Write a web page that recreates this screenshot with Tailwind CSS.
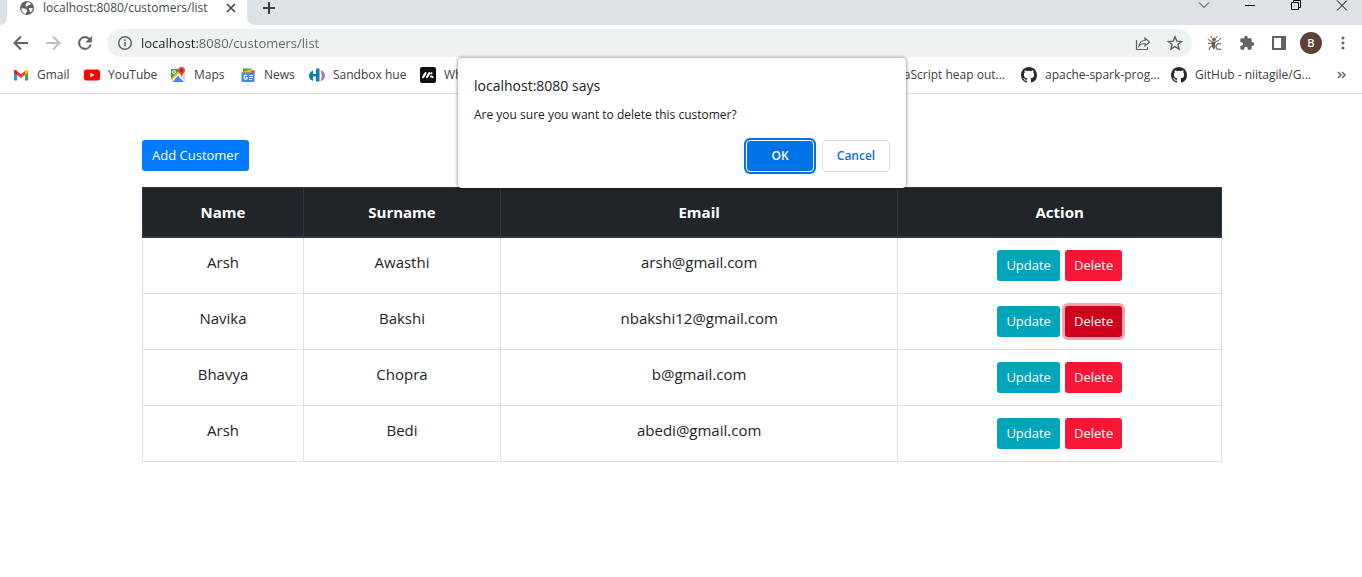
<!DOCTYPE html>
<html lang="en">
<head>
<meta charset="utf-8">
<meta name="viewport" content="width=device-width, initial-scale=1">
<title>localhost:8080/customers/list</title>
<script src="https://cdn.jsdelivr.net/npm/@tailwindcss/browser@4"></script>
</head>
<body class="relative flex min-h-screen flex-col bg-white font-['Open_Sans','Noto_Sans',sans-serif] text-[#212529]">

<svg class="hidden" aria-hidden="true">
  <symbol id="github" viewBox="0 0 16 16"><path fill="#24292f" d="M8 0C3.58 0 0 3.58 0 8c0 3.54 2.29 6.53 5.47 7.59.4.07.55-.17.55-.38 0-.19-.01-.82-.01-1.49-2.01.37-2.53-.49-2.69-.94-.09-.23-.48-.94-.82-1.13-.28-.15-.68-.52-.01-.53.63-.01 1.08.58 1.23.82.72 1.21 1.87.87 2.33.66.07-.52.28-.87.51-1.07-1.78-.2-3.64-.89-3.64-3.95 0-.87.31-1.59.82-2.15-.08-.2-.36-1.02.08-2.12 0 0 .67-.21 2.2.82a7.6 7.6 0 0 1 4 0c1.53-1.04 2.2-.82 2.2-.82.44 1.1.16 1.92.08 2.12.51.56.82 1.27.82 2.15 0 3.07-1.87 3.75-3.65 3.95.29.25.54.73.54 1.48 0 1.07-.01 1.93-.01 2.2 0 .21.15.46.55.38A8.01 8.01 0 0 0 16 8c0-4.42-3.58-8-8-8z"/></symbol>
</svg>

<header>
  <!-- Tab strip -->
  <div class="flex h-[25px] items-stretch justify-between bg-[#dee1e6]">
    <div class="flex">
      <div class="bg-white"><div class="h-full w-[7px] rounded-br-lg bg-[#dee1e6]"></div></div>
      <div class="flex w-[240px] items-start bg-white pl-3 pr-2.5">
        <svg class="size-4 shrink-0" viewBox="0 0 16 16" aria-hidden="true"><circle cx="8" cy="8" r="7" fill="#5f6368"/><path fill="#fff" d="M2.300 8.300L6 8.500l2 1.600v1.400l-1.300 1.200.2 1.500C4.200 13.800 2.300 11.500 2.300 8.300zM8.200 2.200c1.500 0 2.700.5 3.700 1.300L11 5H9.500L8.300 6.300 6.500 6.500V5zM10 8h3.700c-.1 2.100-1 3.700-2.300 4.600L10.500 11z"/></svg>
        <span class="ml-2 grow whitespace-nowrap text-[12px] leading-4 text-[#45494d]">localhost:8080/customers/list</span>
        <button class="mt-0.5 flex size-3 items-center justify-center" aria-label="Close tab"><svg class="size-2.5" viewBox="0 0 10 10" stroke="#3c4043" stroke-width="1.600"><path d="M1 1l8 8M9 1L1 9"/></svg></button>
      </div>
      <div class="bg-white"><div class="h-full w-2 rounded-bl-lg bg-[#dee1e6]"></div></div>
      <button class="ml-2 flex h-4 w-3 items-center" aria-label="New tab"><svg class="size-3" viewBox="0 0 12 12" stroke="#3c4043" stroke-width="2"><path d="M6 0v12M0 6h12"/></svg></button>
    </div>
    <div class="flex items-start gap-[34px] pr-[14px]">
      <button aria-label="Search tabs"><svg class="size-3" viewBox="0 0 12 12" fill="none" stroke="#202124"><path d="M1 2.500l5 5 5-5"/></svg></button>
      <button aria-label="Minimize"><svg class="size-3" viewBox="0 0 12 12" stroke="#000"><path d="M1 5.500h10"/></svg></button>
      <button aria-label="Restore"><svg class="size-3" viewBox="0 0 12 12" fill="none" stroke="#000"><path d="M1.500 2.500h7v7h-7zM3.500 2.500v-2h7v7h-2"/></svg></button>
      <button aria-label="Close"><svg class="size-3" viewBox="0 0 12 12" stroke="#000"><path d="M1 .5l10 10M11 .5L1 10.500"/></svg></button>
    </div>
  </div>

  <!-- Toolbar -->
  <div class="flex h-9 items-center pl-[11px] pr-[11px]">
    <button class="size-5" aria-label="Back"><svg viewBox="0 0 20 20" fill="none" stroke="#5f6368" stroke-width="2"><path d="M17 10H4M10 3.500L3.500 10l6.500 6.500"/></svg></button>
    <button class="ml-3 size-5" aria-label="Forward"><svg viewBox="0 0 20 20" fill="none" stroke="#bdbfc1" stroke-width="2"><path d="M3 10h13M10 3.500l6.500 6.500-6.500 6.500"/></svg></button>
    <button class="ml-3 size-5" aria-label="Reload"><svg viewBox="0 0 24 24" fill="#5f6368"><path d="M17.650 6.350A7.960 7.960 0 0 0 12 4a8 8 0 1 0 7.730 10h-2.080A6 6 0 1 1 12 6c1.660 0 3.140.69 4.220 1.780L13 11h7V4l-2.350 2.350z" stroke="#5f6368" stroke-width=".6"/></svg></button>
    <div class="ml-3 flex h-7 grow items-center rounded-full bg-[#eff2f3] pl-2.5 pr-[9px]">
      <svg class="size-4 shrink-0" viewBox="0 0 16 16" fill="none" stroke="#5f6368" stroke-width="1.500" aria-hidden="true"><circle cx="8" cy="8" r="6.300"/><path d="M8 7v4.500M8 4.300v1.600"/></svg>
      <input aria-label="Address" class="ml-2 h-5 grow bg-[linear-gradient(to_right,#202124_57px,#5f6368_57px)] bg-clip-text text-[13px] leading-5 text-transparent outline-none" value="localhost:8080/customers/list">
      <button class="size-4" aria-label="Share"><svg viewBox="0 0 16 16" fill="none" stroke="#5f6368" stroke-width="1.200"><path d="M1.500 5v9.500h11v-2.500M4 11c.5-4 3-5.500 6-5.500V3l4.500 4-4.500 4V8.500C7.500 8.500 5.500 9 4 11z"/></svg></button>
      <button class="ml-4 size-4" aria-label="Bookmark this tab"><svg viewBox="0 0 16 16" fill="none" stroke="#5f6368" stroke-width="1.400"><path d="M8 1.800l1.800 4.300 4.700.4-3.600 3 1.100 4.600L8 11.600l-4 2.500 1.100-4.600-3.600-3 4.700-.4z"/></svg></button>
    </div>
    <button class="ml-[15px] size-4" aria-label="Extension"><svg viewBox="0 0 16 16" fill="none" stroke="#6b5a50" stroke-width="1"><ellipse cx="7" cy="4.500" rx="2" ry="1.500" fill="#6b5a50" stroke="none"/><path fill="#6b5a50" stroke="none" d="M4.500 6.500h5L8 8.500V13l-1 1.500C5 13 4.300 10 4.500 6.500z"/><path d="M5.500 3.500L3.500 1M8.500 3.500l2-2.500M5 6.500L2.500 5.500 1 3.500M9 6.500l3-1 2-2.500M5 8.500H1M5.500 10.500L3 12l-1 3"/><path stroke="#777" stroke-width="1.500" d="M14 9.200c-2-1.500-5-.2-5 2.300s3 3.800 5 2.300"/></svg></button>
    <button class="ml-4 size-4" aria-label="Extensions"><svg viewBox="0 0 24 24" fill="#5f6368"><path d="M20.500 11H19V7c0-1.100-.9-2-2-2h-4V3.500a2.500 2.500 0 0 0-5 0V5H4c-1.100 0-2 .9-2 2v3.800h1.500a2.700 2.700 0 0 1 0 5.400H2V20c0 1.100.9 2 2 2h3.800v-1.500a2.700 2.700 0 0 1 5.400 0V22H17c1.100 0 2-.9 2-2v-4h1.500a2.500 2.500 0 0 0 0-5z"/></svg></button>
    <button class="ml-4 size-4" aria-label="Side panel"><svg viewBox="0 0 16 16"><path fill="#5f6368" fill-rule="evenodd" d="M1 1h14v14H1zM3 3v10h7V3z"/></svg></button>
    <button class="ml-[13px] size-[22px] rounded-full bg-[#5d4037] text-center text-[11px] font-semibold leading-[22px] text-white" aria-label="Profile">B</button>
    <button class="ml-[13px] size-4" aria-label="Menu"><svg viewBox="0 0 16 16" fill="#5f6368"><circle cx="8" cy="3" r="1.500"/><circle cx="8" cy="8" r="1.500"/><circle cx="8" cy="13" r="1.500"/></svg></button>
  </div>

  <!-- Bookmarks bar -->
  <nav class="flex h-[33px] items-start justify-between border-b border-[#dadce0] pl-[13px] pr-4 pt-1.5 text-[12px] leading-4 text-[#3c4043]" aria-label="Bookmarks">
    <div class="flex whitespace-nowrap">
      <a href="#" class="flex w-[71px] gap-2"><svg class="size-4 shrink-0" viewBox="0 0 16 16"><path fill="#4285f4" d="M1 4.500v9h3V7z"/><path fill="#34a853" d="M15 4.500v9h-3V7z"/><path fill="#ea4335" d="M4 4l4 3 4-3v4l-4 3-4-3z"/><path fill="#c5221f" d="M1 4.500C1 3 2.800 2.600 4 3.700V8L1 6z"/><path fill="#fbbc04" d="M15 4.500c0-1.500-1.800-1.900-3-.8V8l3-2z"/></svg>Gmail</a>
      <a href="#" class="flex w-[86px] gap-2"><svg class="size-4 shrink-0" viewBox="0 0 16 16"><rect y="2.500" width="16" height="11" rx="2.500" fill="#f00"/><path fill="#fff" d="M6.300 5.600v4.800L10.500 8z"/></svg>YouTube</a>
      <a href="#" class="flex w-[70px] gap-2"><svg class="size-4 shrink-0" viewBox="0 0 16 16"><path fill="#34a853" d="M1 2h10v6L3 14l-2 1z"/><path fill="#fff" d="M1 12.500L9.500 4 15 8v6.500L8 9l-5.500 6H1z"/><path fill="#4285f4" d="M2.500 15l5.500-6 6 6z"/><path fill="#fbbc04" d="M1 11.500L8.500 4l1 1.500L1 13.500z"/><path fill="#d5d8db" d="M10 9l5-3v8.500z"/><circle cx="4" cy="5" r="1.500" fill="none" stroke="#fff"/><path fill="#ea4335" d="M11.500 0A3.500 3.500 0 0 0 8 3.500C8 6 11 7 11.500 10 12 7 15 6 15 3.500A3.500 3.500 0 0 0 11.500 0z"/><circle cx="11.500" cy="3.500" r="1.200" fill="#8c1d18"/></svg>Maps</a>
      <a href="#" class="flex w-[69px] gap-2"><svg class="size-4 shrink-0" viewBox="0 0 16 16"><path fill="#34a853" d="M3 1.500h9V7H3z"/><path fill="#fbbc04" d="M1 5l11-3 1 5H2z"/><path fill="#ea4335" d="M12 3l3 .8-1 4h-3z"/><rect x="1.500" y="5.500" width="13" height="9.500" rx="1" fill="#4285f4"/><path fill="none" stroke="#fff" stroke-width="1.200" d="M7 8.500C5.500 7.500 4 8.500 4 10.200s1.800 2.800 3 1.500v-1.200H5.800M9 8.500h4M9 10.500h4M9 12.500h3"/></svg>News</a>
      <a href="#" class="flex w-[111px] gap-2"><svg class="size-4 shrink-0" viewBox="0 0 16 16"><path fill="#0b7fad" d="M4 3.500V7h3V1.500h3.500v13H7v-5H4V14C1.500 13 0 11 0 8.700S1.500 4.500 4 3.500z"/><path fill="#a97bb5" d="M11.500 3C14.500 4 16 6 16 8.500S14.500 13 11.500 14.500c1.500-3 1.500-8.500 0-11.500z"/></svg>Sandbox hue</a>
      <a href="#" class="flex gap-2"><svg class="size-4 shrink-0" viewBox="0 0 16 16"><rect width="16" height="16" rx="2" fill="#111"/><path stroke="#fff" stroke-width="2.200" stroke-linecap="round" d="M3.200 10L5.500 6.200M7 10l2.300-3.800M11.500 6.300v0M12.500 10v0M11 9.500v0"/></svg>Wh</a>
    </div>
    <div class="flex whitespace-nowrap">
      <a href="#" class="mr-4">JavaScript heap out...</a>
      <a href="#" class="flex w-[150px] gap-2"><svg class="size-4 shrink-0"><use href="#github"/></svg>apache-spark-prog...</a>
      <a href="#" class="flex w-[166px] gap-2"><svg class="size-4 shrink-0"><use href="#github"/></svg>GitHub - niitagile/G...</a>
      <button class="flex h-4 items-center" aria-label="More bookmarks"><svg class="w-[9px]" viewBox="0 0 9 8" fill="none" stroke="#5f6368" stroke-width="1.500"><path d="M1 1l3 3-3 3M5 1l3 3-3 3"/></svg></button>
    </div>
  </nav>
</header>

<main class="mx-auto w-full max-w-[1082px] pl-0.5 pt-[46px]">
  <button class="h-[31px] w-[107px] rounded-[3px] bg-[#007bff] text-[13px] leading-[31px] text-white">Add Customer</button>
  <table class="mt-4 w-full table-fixed border-collapse text-center text-[15px] leading-6">
    <thead class="bg-[#212529] text-white">
      <tr class="h-[49px]">
        <th class="w-[161px] border border-b-2 border-[#32383e] font-bold">Name</th>
        <th class="w-[197px] border border-b-2 border-[#32383e] font-bold">Surname</th>
        <th class="border border-b-2 border-[#32383e] font-bold">Email</th>
        <th class="w-[30%] border border-b-2 border-[#32383e] font-bold">Action</th>
      </tr>
    </thead>
    <tbody id="rows"></tbody>
  </table>
</main>

<!-- Confirmation dialog -->
<div class="pointer-events-none absolute inset-x-0 top-[58px] flex justify-center pl-0.5">
  <div role="dialog" aria-labelledby="dialog-title" class="pointer-events-auto w-[448px] rounded bg-white p-4 text-[#202124] shadow-[0_0_3px_1px_rgba(0,0,0,0.35)]">
    <h2 id="dialog-title" class="text-[14px] leading-6">localhost:8080 says</h2>
    <p class="mt-[7px] text-[12px] leading-5">Are you sure you want to delete this customer?</p>
    <div class="mt-[15px] flex justify-end gap-2 text-[12px] font-semibold">
      <button class="h-8 w-[68px] rounded border border-white bg-[#0073e6] text-white ring-2 ring-[#0073e6]">OK</button>
      <button class="h-8 w-[68px] rounded border border-[#dadce0] text-[#0d6fdc]">Cancel</button>
    </div>
  </div>
</div>

<script>
const customers = [
  ["Arsh", "Awasthi", "arsh@gmail.com"],
  ["Navika", "Bakshi", "nbakshi12@gmail.com"],
  ["Bhavya", "Chopra", "b@gmail.com"],
  ["Arsh", "Bedi", "abedi@gmail.com"],
];
const cell = "border border-[#dee2e6] p-3 align-top";
const idle = "bg-[#f71735]";
const pressed = "bg-[#d0021b] ring-3 ring-[#fba2ae]";
document.getElementById("rows").innerHTML = customers.map((c, i) => `
  <tr class="h-14">
    ${c.map(v => `<td class="${cell}">${v}</td>`).join("")}
    <td class="${cell}"><div class="flex justify-center gap-[5px] text-[13px] leading-[31px] text-white">
      <button class="h-[31px] w-[63px] rounded-[3px] bg-[#00a5bb]">Update</button>
      <button class="h-[31px] w-[57px] rounded-[3px] ${i === 1 ? pressed : idle}">Delete</button>
    </div></td>
  </tr>`).join("");
</script>
</body>
</html>
